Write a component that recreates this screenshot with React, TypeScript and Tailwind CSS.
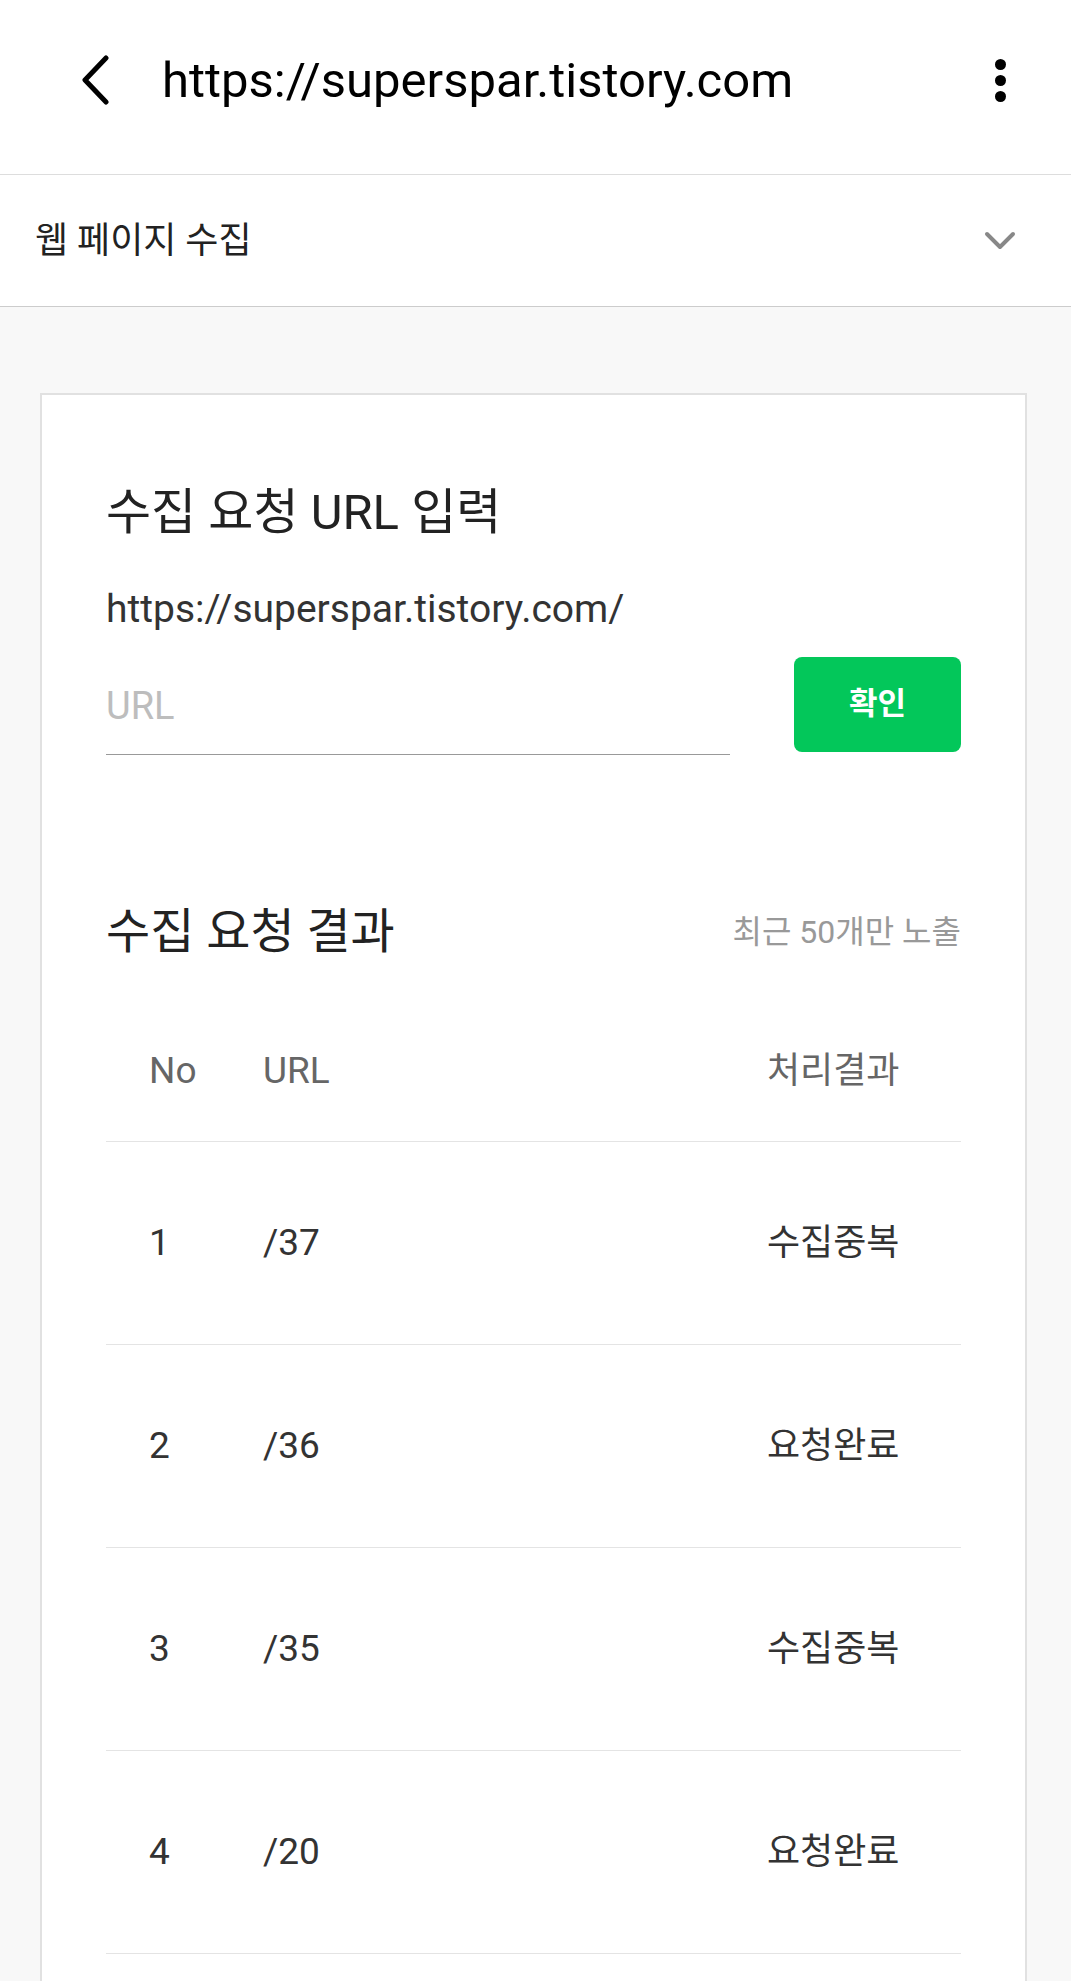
import { useState } from 'react';

type Row = { no: number; url: string; result: string };

const rows: Row[] = [
  { no: 1, url: '/37', result: '수집중복' },
  { no: 2, url: '/36', result: '요청완료' },
  { no: 3, url: '/35', result: '수집중복' },
  { no: 4, url: '/20', result: '요청완료' },
  { no: 5, url: '/19', result: '요청완료' },
];

const font = 'font-["Roboto","Noto_Sans_CJK_KR",sans-serif]';

export default function App() {
  const [url, setUrl] = useState('');

  return (
    <div className={`min-h-screen bg-[#f8f8f8] ${font}`}>
      {/* top bar */}
      <div className="h-[175px] bg-white border-b border-[#dddddd] flex items-center pb-[14px]">
        <button className="ml-[79px] w-[32px] h-[50px] flex items-center justify-center">
          <svg width="32" height="50" viewBox="0 0 32 50" fill="none">
            <path d="M27 3 L6 25 L27 47" stroke="#000" strokeWidth="5" strokeLinecap="round" strokeLinejoin="round" />
          </svg>
        </button>
        <h1 className="ml-[51px] flex-1 text-[49px] leading-none text-black">https://superspar.tistory.com</h1>
        <button className="mr-[65px] flex flex-col items-center gap-[5px]">
          <span className="w-[11px] h-[11px] rounded-full bg-black" />
          <span className="w-[11px] h-[11px] rounded-full bg-black" />
          <span className="w-[11px] h-[11px] rounded-full bg-black" />
        </button>
      </div>

      {/* section selector */}
      <div className="h-[132px] bg-white border-b border-[#cccccc] flex items-center justify-between pl-[35px] pr-[55px]">
        <span className="text-[36px] leading-none text-[#222]">웹 페이지 수집</span>
        <svg width="32" height="20" viewBox="0 0 32 20" fill="none">
          <path d="M3 3 L16 16 L29 3" stroke="#888" strokeWidth="4" strokeLinecap="round" strokeLinejoin="round" />
        </svg>
      </div>

      {/* card */}
      <div className="ml-[40px] mr-[44px] mt-[86px] bg-white border-2 border-[#e1e1e1] px-[64px] pt-[93px] pb-[60px]">
        <h2 className="text-[49px] leading-none text-[#222]">수집 요청 URL 입력</h2>
        <p className="mt-[53px] text-[39px] leading-none text-[#333]">https://superspar.tistory.com/</p>

        <div className="mt-[28px] flex items-start justify-between">
          <input
            value={url}
            onChange={(e) => setUrl(e.target.value)}
            placeholder="URL"
            className="w-[624px] h-[98px] border-b border-[#999] text-[38px] text-[#333] placeholder:text-[#bdbdbd] outline-none bg-transparent"
          />
          <button className="w-[167px] h-[95px] rounded-[8px] bg-[#03c75a] text-white text-[31px] font-bold">확인</button>
        </div>

        <div className="mt-[153px] flex items-center justify-between">
          <h2 className="text-[48px] leading-none text-[#222]">수집 요청 결과</h2>
          <span className="text-[32px] leading-none text-[#999]">최근 50개만 노출</span>
        </div>

        <div className="mt-[44px]">
          <div className="h-[142px] border-b border-[#e4e4e4] flex items-center text-[#666]">
            <span className="w-[157px] pl-[43px] text-[37px]">No</span>
            <span className="flex-1 text-[37px]">URL</span>
            <span className="w-[194px] text-[36px]">처리결과</span>
          </div>
          {rows.map((r) => (
            <div key={r.no} className="h-[203px] border-b border-[#e4e4e4] flex items-center text-[#333]">
              <span className="w-[157px] pl-[43px] text-[37px]">{r.no}</span>
              <span className="flex-1 text-[37px]">{r.url}</span>
              <span className="w-[194px] text-[36px]">{r.result}</span>
            </div>
          ))}
        </div>
      </div>
    </div>
  );
}
